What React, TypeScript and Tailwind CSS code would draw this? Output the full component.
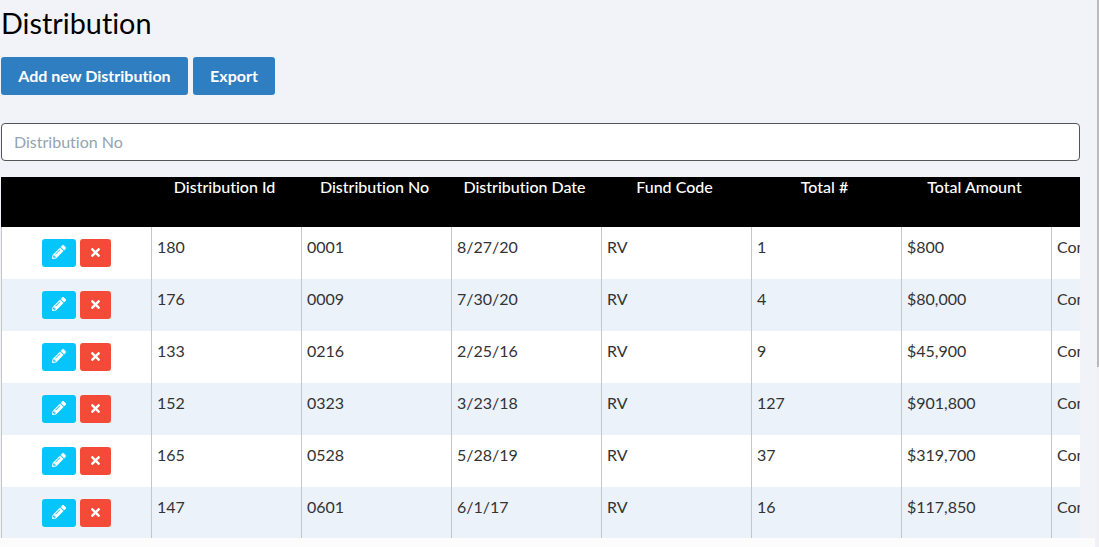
import { FaPencilAlt, FaTimes } from 'react-icons/fa'

const rows = [
  ['180', '0001', '8/27/20', 'RV', '1', '$800'],
  ['176', '0009', '7/30/20', 'RV', '4', '$80,000'],
  ['133', '0216', '2/25/16', 'RV', '9', '$45,900'],
  ['152', '0323', '3/23/18', 'RV', '127', '$901,800'],
  ['165', '0528', '5/28/19', 'RV', '37', '$319,700'],
  ['147', '0601', '6/1/17', 'RV', '16', '$117,850'],
]

const headers = ['', 'Distribution Id', 'Distribution No', 'Distribution Date', 'Fund Code', 'Total #', 'Total Amount', '']

export default function App() {
  return (
    <div className="flex h-[547px] overflow-hidden bg-[#f1f3f8] font-['Lato','Open_Sans',sans-serif] text-[#333] [font-variant-ligatures:none]">
      <div className="flex min-w-0 flex-1 flex-col">
        <div className="min-h-0 flex-1 overflow-hidden pl-px pr-[17px]">
          <h1 className="h-[57px] pt-[5px] text-[28.8px] leading-[36px] text-black">Distribution</h1>
          <div className="flex gap-[5px]">
            <button className="h-[38px] w-[187px] rounded-[3px] bg-[#2f7ec1] text-[16px] font-bold text-white">Add new Distribution</button>
            <button className="h-[38px] w-[82px] rounded-[3px] bg-[#2f7ec1] text-[16px] font-bold text-white">Export</button>
          </div>
          <input
            placeholder="Distribution No"
            className="mt-[28px] block h-[38px] w-[1079px] rounded-[4px] border border-[#555] bg-white px-3 pb-[2px] text-[16px] outline-none placeholder:text-[#94a3af]"
          />
          <div className="mt-4 w-[1079px] overflow-hidden">
            <table className="w-[1200px] table-fixed border-separate border-spacing-0">
              <thead>
                <tr className="h-[50px] bg-black text-white">
                  {headers.map((h, i) => (
                    <th key={i} className="w-[150px] pr-[3px] align-top text-[16px] leading-[20px] font-medium">
                      {h}
                    </th>
                  ))}
                </tr>
              </thead>
              <tbody>
                {rows.map((r, i) => (
                  <tr key={r[0]} className={`h-[52px] ${i % 2 ? 'bg-[#ebf2fa]' : 'bg-white'}`}>
                    <td className="border-l border-[#c6c6c6] pt-[12px] align-top">
                      <div className="flex justify-center gap-[4px] pr-px">
                        <button className="flex h-[28px] w-[34px] items-center justify-center rounded-[3px] bg-[#06c5fb] pb-[2px] text-[14px] text-white">
                          <FaPencilAlt />
                        </button>
                        <button className="flex h-[28px] w-[31px] items-center justify-center rounded-[3px] bg-[#f44b38] pb-[2px] text-[13px] text-white">
                          <FaTimes />
                        </button>
                      </div>
                    </td>
                    {r.map((c, j) => (
                      <td key={j} className="border-l border-[#c6c6c6] pt-[8px] pl-[5px] align-top text-[16px] leading-[24px]">
                        {c}
                      </td>
                    ))}
                    <td className="border-l border-[#c6c6c6] pt-[8px] pl-[5px] align-top text-[16px] leading-[24px]">Complete</td>
                  </tr>
                ))}
              </tbody>
            </table>
          </div>
        </div>
        <div className="flex h-[9px] shrink-0">
          <div className="w-[1095px] bg-[#fcfcfc]" />
        </div>
      </div>
      <div className="flex w-[2px] shrink-0 flex-col bg-[#f0f0f0]">
        <div className="h-[367px] bg-[#b9b9b9]" />
      </div>
    </div>
  )
}
